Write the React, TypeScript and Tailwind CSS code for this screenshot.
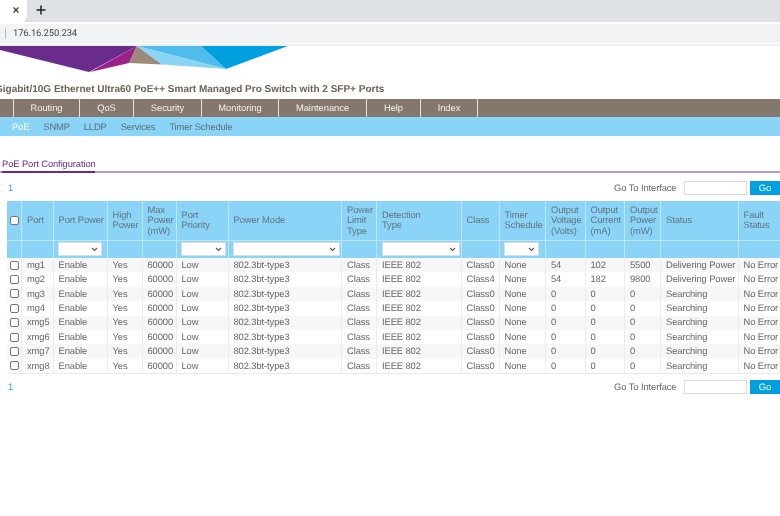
import React from "react";

const navItems = [
  { label: "", w: "w-[14px]" },
  { label: "Routing", w: "w-[66px]" },
  { label: "QoS", w: "w-[54px]" },
  { label: "Security", w: "w-[68px]" },
  { label: "Monitoring", w: "w-[77px]" },
  { label: "Maintenance", w: "w-[88px]" },
  { label: "Help", w: "w-[54px]" },
  { label: "Index", w: "w-[57px]" },
];
const subItems = ["SNMP", "LLDP", "Services", "Timer Schedule"];
const widths = [14.5, 31.5, 54, 35, 34, 52, 113.5, 35, 84.5, 38, 46.5, 39.5, 39.5, 36, 77.5, 42];
const headers = ["", "Port", "Port Power", "High Power", "Max Power (mW)", "Port Priority", "Power Mode", "Power Limit Type", "Detection\nType", "Class", "Timer Schedule", "Output Voltage (Volts)", "Output Current (mA)", "Output Power (mW)", "Status", "Fault Status"];
const filters: Record<number, string> = { 2: "w-[44px]", 5: "w-[45px]", 6: "w-[107px]", 8: "w-[78px]", 10: "w-[35px]" };
const rows = [
  ["mg1", "Class0", "54", "102", "5500", "Delivering Power"],
  ["mg2", "Class4", "54", "182", "9800", "Delivering Power"],
  ["mg3", "Class0", "0", "0", "0", "Searching"],
  ["mg4", "Class0", "0", "0", "0", "Searching"],
  ["xmg5", "Class0", "0", "0", "0", "Searching"],
  ["xmg6", "Class0", "0", "0", "0", "Searching"],
  ["xmg7", "Class0", "0", "0", "0", "Searching"],
  ["xmg8", "Class0", "0", "0", "0", "Searching"],
];

function Check() {
  return <span className="block w-[9px] h-[9px] rounded-[2px] border border-[#767676] bg-white ml-[3px]" />;
}

function Pager({ top }: { top: string }) {
  return (
    <div className={`flex items-center h-[16px] pl-[8px] ${top}`}>
      <span className="text-[#1fa6e0] text-[9.4px]">1</span>
      <span className="ml-auto text-[#666] text-[9.4px] tracking-[-0.1px]">Go To Interface</span>
      <span className="ml-[7.5px] w-[63px] h-[14px] bg-white border border-[#ddd]" />
      <span className="ml-[3px] w-[30px] h-[14px] shrink-0 bg-[#009fdf] text-white text-[9.4px] flex items-center justify-center">Go</span>
    </div>
  );
}

export default function App() {
  return (
    <div className="w-[780px] h-[516px] overflow-hidden bg-white text-[#666] font-['Liberation_Sans',Arial,sans-serif] [text-rendering:geometricPrecision] blur-[0.3px]">
      {/* browser chrome */}
      <div className="h-[22px] bg-[#dee1e6] flex items-stretch">
        <div className="w-[27px] bg-white rounded-br-[6px] flex items-center justify-center text-[#444]">
          <svg width="8" height="8" viewBox="0 0 8 8" className="ml-[4px] mb-[3px]"><path d="M1.5 1.5l5 5M6.5 1.5l-5 5" stroke="#3c4043" strokeWidth="1.4" /></svg>
        </div>
        <div className="ml-[9px] flex items-center">
          <svg width="10" height="10" viewBox="0 0 10 10" className="mb-[3px]"><path d="M5 .5v9M.5 5h9" stroke="#202124" strokeWidth="1.5" /></svg>
        </div>
      </div>
      <div className="h-[24px] bg-white pt-[2px] border-b-2 border-[#eeeff0]">
        <div className="h-[19px] bg-[#f1f3f4] flex items-center pl-[5px]">
          <span className="w-px h-[11px] bg-[#b8b8b8]" />
          <span className="ml-[7px] pt-[2px] text-[9.4px] tracking-[-0.1px] text-[#444] font-['Roboto',sans-serif]">176.16.250.234</span>
        </div>
      </div>
      {/* logo */}
      <div className="h-[33px]">
        <svg width="300" height="28" viewBox="0 46 300 28" className="block">
          <polygon points="0,46 137,46 89,72 0,50" fill="#6a2c8c" />
          <polygon points="90,72 137,46 129,63" fill="#9b2188" />
          <polygon points="137,46 129,63 162,64.5" fill="#9c8b7c" />
          <polygon points="137,46 201,46 226,69" fill="#50bcee" />
          <polygon points="137,46 162,64.5 226,69" fill="#8ad4f8" />
          <polygon points="201,46 288,46 226,69" fill="#009fdf" />
        </svg>
      </div>
      {/* title */}
      <div className="h-[20px] -ml-[5px] whitespace-nowrap text-[10px] leading-[22px] font-bold text-[#6e6257]">Gigabit/10G Ethernet Ultra60 PoE++ Smart Managed Pro Switch with 2 SFP+ Ports</div>
      {/* main nav */}
      <div className="h-[18px] bg-[#84786c] flex text-[#f4f1ee] text-[9.4px] tracking-[-0.05px] leading-[18px]">
        {navItems.map((n) => (
          <div key={n.label} className={`${n.w} shrink-0 text-center border-r border-[#e6e2dd]`}>{n.label}</div>
        ))}
      </div>
      {/* sub nav */}
      <div className="h-[19px] pt-[1px] bg-[#8ad4f8] flex items-center pl-[12px] gap-[14px] text-[9.4px] tracking-[-0.15px] text-[#5f6e78]">
        <span className="text-white">PoE</span>
        {subItems.map((s) => <span key={s}>{s}</span>)}
      </div>
      {/* tab */}
      <div className="mt-[20px] h-[17px] border-b-2 border-[#b79ccb]">
        <div className="ml-[2px] w-[93px] h-[17px] border-b-2 border-[#6a2c8c] text-[#6a2c8c] text-[9.4px] tracking-[-0.1px] leading-[16px] whitespace-nowrap">PoE Port Configuration</div>
      </div>
      <Pager top="mt-[7px]" />
      {/* table */}
      <div className="mt-[5px] ml-[7px] w-[773px]">
        <table className="table-fixed border-collapse w-[773px] text-[9.4px] tracking-[-0.1px] leading-[10.5px]">
          <colgroup>
            {widths.map((w, i) => <col key={i} style={{ width: w }} />)}
          </colgroup>
          <thead>
            <tr className="h-[39px] bg-[#8ad4f8] text-[#64737d]">
              {headers.map((h, i) => (
                <th key={i} className={`font-normal text-left align-middle pr-0 whitespace-pre-line border-r border-[#bfe6fa] border-b ${i === 0 ? "pl-0" : "pl-[5px]"}`}>
                  {i === 0 ? <Check /> : h}
                </th>
              ))}
            </tr>
            <tr className="h-[18px] bg-[#8ad4f8]">
              {headers.map((_, i) => (
                <td key={i} className="p-0 border-r border-[#bfe6fa]">
                  {filters[i] && (
                    <span className={`${filters[i]} h-[14px] ml-[4.5px] bg-white border border-[#ddd] flex items-center justify-end pr-[3px]`}>
                      <svg width="7" height="5" viewBox="0 0 7 5"><path d="M1 1l2.5 2.5L6 1" stroke="#555" strokeWidth="1.1" fill="none" /></svg>
                    </span>
                  )}
                </td>
              ))}
            </tr>
          </thead>
          <tbody>
            {rows.map((r, i) => {
              const cells = ["", r[0], "Enable", "Yes", "60000", "Low", "802.3bt-type3", "Class", "IEEE 802", r[1], "None", r[2], r[3], r[4], r[5], "No Error"];
              return (
                <tr key={r[0]} className={`h-[14.375px] ${i % 2 === 0 ? "bg-[#f7f7f7]" : "bg-white"}`}>
                  {cells.map((c, j) => (
                    <td key={j} className={`pr-0 py-0 whitespace-nowrap border-r border-[#ececec] border-b-0 ${j === 0 ? "pl-0" : "pl-[5px]"}`}>
                      {j === 0 ? <Check /> : c}
                    </td>
                  ))}
                </tr>
              );
            })}
          </tbody>
        </table>
        <div className="h-px w-[773px] bg-[#eaeaea]" />
      </div>
      <Pager top="mt-[5px]" />
    </div>
  );
}
